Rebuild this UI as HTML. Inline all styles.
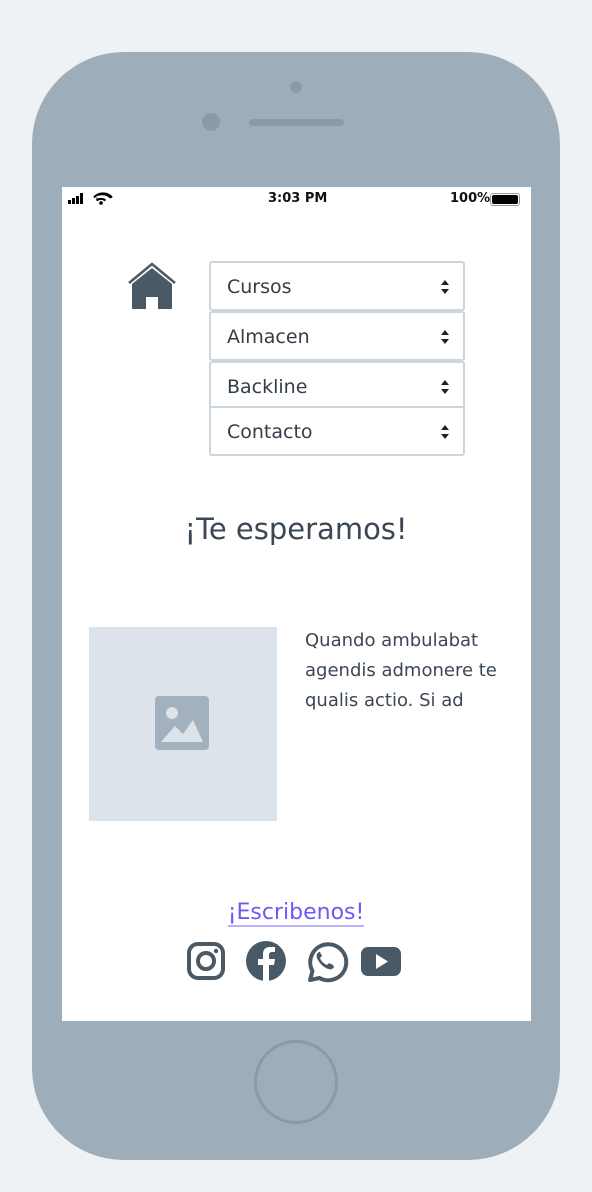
<!DOCTYPE html>
<html><head><meta charset="utf-8"><style>
*{margin:0;padding:0;box-sizing:border-box}
body{width:592px;height:1192px;background:#eff2f5;position:relative;font-family:"DejaVu Sans","Liberation Sans",sans-serif;color:#3b4754;overflow:hidden}
.abs{position:absolute}
.phone{left:32px;top:52px;width:528px;height:1108px;background:#9eadba;border-radius:92px}
.screen{left:62px;top:187px;width:469px;height:834px;background:#fff}
.sel{position:absolute;left:209px;width:256px;height:50px;border:2px solid #ccd4dc;border-radius:3px;background:#fff;font-size:19px;padding-left:16px;line-height:48px;color:#333d48}
.sel svg{position:absolute;right:14px;top:17px}
</style></head><body>
<div class="abs phone"></div>
<div class="abs" style="left:290px;top:81px;width:12px;height:12px;border-radius:50%;background:#8a9aa8"></div>
<div class="abs" style="left:202px;top:113px;width:18px;height:18px;border-radius:50%;background:#8a9aa8"></div>
<div class="abs" style="left:249px;top:119px;width:95px;height:7px;border-radius:4px;background:#8a9aa8"></div>
<div class="abs" style="left:254px;top:1040px;width:84px;height:84px;border-radius:50%;border:3px solid #8a9aa8"></div>
<div class="abs screen"></div>
<svg class="abs" style="left:68px;top:192px" width="50" height="14"><rect x="0" y="8" width="3" height="4" fill="#000"/><rect x="4" y="6" width="3" height="6" fill="#000"/><rect x="8" y="4" width="3" height="8" fill="#000"/><rect x="12" y="1" width="3" height="11" fill="#000"/><path d="M30 3a12 12 0 0 1 13 3M28.5 6.5l1 0M26 5.5a12 12 0 0 1 18 0M28.5 8.5a7 7 0 0 1 9 0" stroke="#000" stroke-width="2" fill="none"/><circle cx="33" cy="11" r="1.8" fill="#000"/></svg>
<div class="abs" style="left:268px;top:191px;font-size:13px;font-weight:bold;color:#111">3:03 PM</div>
<div class="abs" style="left:450px;top:191px;font-size:13px;font-weight:bold;color:#111">100%</div>
<div class="abs" style="left:490px;top:193px;width:30px;height:13px;border:1px solid #999;border-radius:3px;padding:1px"><div style="width:100%;height:100%;background:#000;border-radius:2px"></div></div>
<svg class="abs" style="left:127px;top:261px" width="52" height="50"><path d="M2 22L25 3L48 22" stroke="#4a5966" stroke-width="2.5" fill="none"/><path d="M5 23L25 7L45 23V48H31V36H19V48H5Z" fill="#4a5966"/></svg>
<div class="sel" style="top:261px">Cursos<svg width="8" height="14"><path d="M0 5L4 0L8 5ZM0 9L4 14L8 9Z" fill="#222"/></svg></div>
<div class="sel" style="top:311px">Almacen<svg width="8" height="14"><path d="M0 5L4 0L8 5ZM0 9L4 14L8 9Z" fill="#222"/></svg></div>
<div class="sel" style="top:361px">Backline<svg width="8" height="14"><path d="M0 5L4 0L8 5ZM0 9L4 14L8 9Z" fill="#222"/></svg></div>
<div class="sel" style="top:406px">Contacto<svg width="8" height="14"><path d="M0 5L4 0L8 5ZM0 9L4 14L8 9Z" fill="#222"/></svg></div>
<div class="abs" style="left:0;width:592px;top:512px;text-align:center;font-size:29px">¡Te esperamos!</div>
<div class="abs" style="left:89px;top:627px;width:188px;height:194px;background:#dde3ea"></div>
<svg class="abs" style="left:155px;top:696px" width="54" height="54"><rect width="54" height="54" rx="4" fill="#a3b0bd"/><circle cx="17" cy="17" r="6" fill="#dde3ea"/><path d="M6 46L20 30L28 38L38 24L48 46Z" fill="#dde3ea"/></svg>
<div class="abs" style="left:305px;top:626px;font-size:18px;line-height:30px">Quando ambulabat<br>agendis admonere te<br>qualis actio. Si ad</div>
<div class="abs" style="left:0;width:592px;top:900px;text-align:center;font-size:22px;color:#6b5cf5"><span style="border-bottom:2px solid #bbb2ff">¡Escribenos!</span></div>
<svg class="abs" style="left:186px;top:941px" width="220" height="42">
<rect x="3" y="3" width="34" height="34" rx="9" stroke="#4a5966" stroke-width="4" fill="none"/><circle cx="20" cy="20" r="8" stroke="#4a5966" stroke-width="4" fill="none"/><circle cx="30" cy="10" r="2.2" fill="#4a5966"/>
<circle cx="80" cy="20" r="20" fill="#4a5966"/><path d="M83 40V24h5l1-6h-6v-4c0-2 1-3 3-3h3V6h-5c-5 0-7 3-7 7v5h-5v6h5v16Z" fill="#fff"/>
<path d="M124 39l2.5-9a18 18 0 1 1 7 7Z" stroke="#4a5966" stroke-width="4" fill="none" stroke-linejoin="round"/><path d="M133 11c-2 1-3 3-2 6 2 5 6 9 11 11 3 1 5 0 6-2l-1-2-4-2-2 2c-3-1-6-4-7-7l2-2-2-4Z" fill="#4a5966"/>
<rect x="175" y="6" width="40" height="29" rx="7" fill="#4a5966"/><path d="M190 13v15l12-7.5Z" fill="#fff"/>
</svg>
</body></html>
